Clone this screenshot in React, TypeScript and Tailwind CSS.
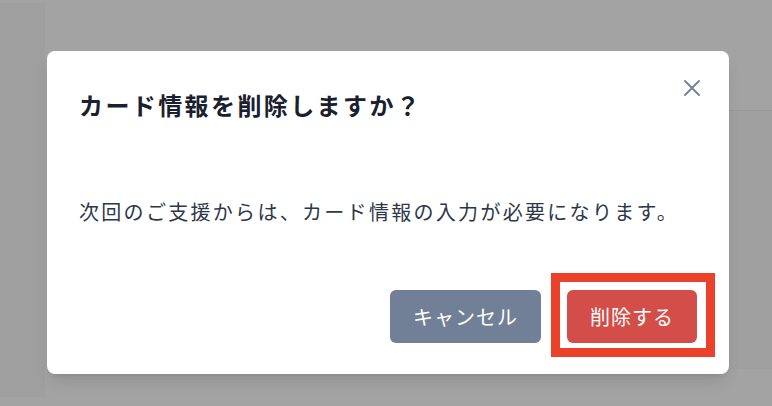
import * as React from "react";

const jp = { fontFamily: '"Noto Sans CJK JP", "Noto Sans", sans-serif' };

/** 閉じるボタン（×） */
function CloseIcon() {
  return (
    <svg width="16" height="16" viewBox="0 0 16 16" fill="none" aria-hidden>
      <path d="M1 1L15 15M15 1L1 15" stroke="#718096" strokeWidth="1.8" strokeLinecap="round" />
    </svg>
  );
}

export default function App() {
  return (
    <div className="relative h-[406px] w-[772px] overflow-hidden bg-[#a3a3a3]" style={jp}>
      {/* ── 背景のページ（オーバーレイ越し） ── */}
      <div className="flex h-full">
        <aside className="mt-[3px] mb-[9px] w-[45px] shrink-0 bg-[#9f9f9f]" />
        <main className="flex flex-1 flex-col pl-[40px]">
          <div className="mt-[110px] h-[259px] border-t border-[#999999] bg-[#a0a0a0]" />
        </main>
      </div>

      {/* ── ダイアログ ── */}
      <div className="absolute left-[47px] top-[51px] flex h-[323px] w-[682px] flex-col rounded-lg bg-white px-8 pt-[38px] pb-[31px] shadow-lg">
        <button className="absolute right-[29px] top-[29px]" aria-label="閉じる">
          <CloseIcon />
        </button>

        <h2 className="text-[24px] font-bold leading-[32px] tracking-[0.1em] text-[#1a202c]">
          カード情報を削除しますか？
        </h2>

        <p className="mt-[77px] text-[20px] leading-[28px] tracking-[0.115em] text-[#2d3748]">
          次回のご支援からは、カード情報の入力が必要になります。
        </p>

        <div className="mt-auto flex justify-end gap-[26px]">
          <button className="h-[53px] rounded-md bg-[#718096] px-[23px] text-[20px] tracking-wider text-white">
            キャンセル
          </button>
          <div className="relative">
            <button className="h-[53px] rounded-md bg-[#d44e49] px-[23px] text-[20px] tracking-wider text-white">
              削除する
            </button>
            {/* 注釈の赤枠 */}
            <div className="pointer-events-none absolute -left-[16px] -right-[18px] -top-[17px] -bottom-[14px] border-[9px] border-[#ea412b]" />
          </div>
        </div>
      </div>
    </div>
  );
}
